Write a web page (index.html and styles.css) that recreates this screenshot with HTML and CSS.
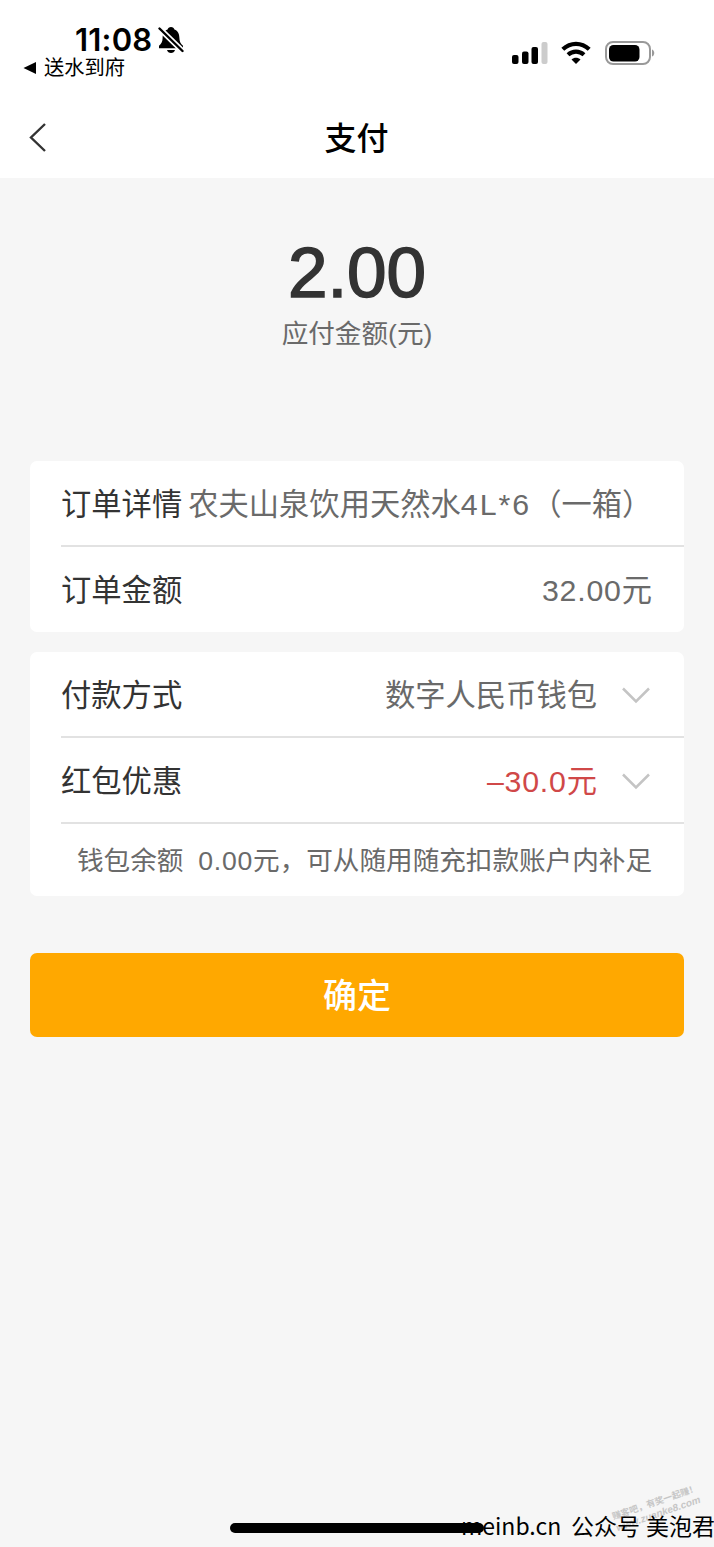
FILE: index.html
```html
<!DOCTYPE html>
<html lang="zh-CN">
<head>
    <meta charset="UTF-8">
    <meta name="viewport" content="width=device-width, initial-scale=1.0">
    <title>支付</title>
    <link rel="stylesheet" href="styles.css">
</head>
<body>
    <div class="status-bar">
        <div class="status-left">
            <div class="time-row">
                <span class="time">11:08</span>
                <svg class="bell" width="26" height="28" viewBox="0 0 26 28">
                    <path d="M13 1c-1.900 0-3 1-3.400 2.400C6 4.800 4.600 8 4.600 12c0 4-1.300 5.500-3.600 7.800v2.400h24v-2.400c-2.300-2.300-3.600-3.800-3.600-7.800 0-4-1.400-7.200-5-8.600C16 2 14.900 1 13 1z"/>
                    <path d="M9 24h8c-.5 1.900-2 2.900-4 2.900s-3.500-1-4-2.900z"/>
                    <path class="bell-gap" d="M1.500 2.500l23 22.500"/>
                    <path class="bell-slash" d="M1.500 2.500l23 22.500"/>
                </svg>
            </div>
            <div class="back-app">
                <svg width="14" height="14" viewBox="0 0 14 14"><path d="M0.500 7L13 1v12z"/></svg>
                <span>送水到府</span>
            </div>
        </div>
        <div class="status-right">
            <svg width="36" height="24" viewBox="0 0 36 24">
                <rect x="0" y="14" width="6.500" height="9" rx="2"/>
                <rect x="10" y="10.500" width="6.500" height="12.500" rx="2"/>
                <rect x="19.500" y="6" width="6.500" height="17" rx="2"/>
                <rect class="bar-off" x="29.500" y="1" width="6" height="22" rx="2"/>
            </svg>
            <svg class="wifi" width="30" height="24" viewBox="0 0 30 24">
                <path class="wifi-arc" d="M1.800 8.300C9.500 1 20.500 1 28.200 8.300"/>
                <path class="wifi-arc" d="M7 13.800c4.700-4.200 11.300-4.200 16 0"/>
                <path d="M15 23l-4.500-4.500c2.600-2.300 6.400-2.300 9 0z"/>
            </svg>
            <svg class="battery" width="50" height="24" viewBox="0 0 50 24">
                <rect class="battery-shell" x="1" y="1" width="44" height="22" rx="7"/>
                <rect x="4" y="4" width="30.500" height="16.500" rx="4.500"/>
                <path class="battery-tip" d="M47 8.500c3 1 3 6 0 7z"/>
            </svg>
        </div>
    </div>
    <div class="nav-bar">
        <svg class="nav-back" width="18" height="30" viewBox="0 0 18 30"><path d="M16 2L2 15.500 16 29"/></svg>
        <div class="nav-title">支付</div>
    </div>

    <div class="amount">
        <div class="amount-value">2.00</div>
        <div class="amount-label">应付金额(元)</div>
    </div>

    <div class="card order-card">
        <div class="row">
            <span class="label">订单详情</span>
            <span class="value goods">农夫山泉饮用天然水<span class="spec">4L*6</span>（一箱）</span>
        </div>
        <div class="row">
            <span class="label">订单金额</span>
            <span class="value"><span class="num">32.00</span>元</span>
        </div>
    </div>

    <div class="card pay-card">
        <div class="row">
            <span class="label">付款方式</span>
            <span class="value">数字人民币钱包</span>
            <svg class="arrow" width="30" height="17" viewBox="0 0 30 17"><path d="M2 1.500l13 13 13-13"/></svg>
        </div>
        <div class="row">
            <span class="label">红包优惠</span>
            <span class="value discount"><span class="num">–30.0</span>元</span>
            <svg class="arrow" width="30" height="17" viewBox="0 0 30 17"><path d="M2 1.500l13 13 13-13"/></svg>
        </div>
        <div class="row tip">
            <span>钱包余额&nbsp; <span class="num">0.00</span>元，可从随用随充扣款账户内补足</span>
        </div>
    </div>

    <button class="confirm-button">确定</button>

    <div class="home-indicator"></div>
    <div class="stamp">
        <div>赚客吧，有奖一起赚！</div>
        <div class="stamp-url">www.zuanke8.com</div>
    </div>
    <div class="watermark"><span class="site">meinb.cn</span><span class="account">公众号</span><span>美泡君</span></div>
</body>
</html>
```
FILE: styles.css
```css
* {
    box-sizing: border-box;
}
body {
    position: relative;
    height: 1547px;
    margin: 0;
    overflow: hidden;
    background-color: #f6f6f6;
    font-family: "Liberation Sans", "Noto Sans CJK SC", sans-serif;
    color: #333;
}
svg {
    display: block;
    flex: none;
}
.status-bar {
    display: flex;
    justify-content: space-between;
    height: 96px;
    padding: 24px 59px 0 23px;
    background-color: #fff;
    color: #000;
}
.time-row {
    display: flex;
    align-items: center;
    height: 31px;
    padding-left: 52px;
}
.time {
    width: 83px;
    font-family: Inter, sans-serif;
    font-size: 31px;
    font-weight: 600;
    line-height: 31px;
    letter-spacing: 0.2px;
}
.bell-gap,
.bell-slash {
    fill: none;
    stroke: #fff;
    stroke-width: 5.5;
}
.bell-slash {
    stroke: #000;
    stroke-width: 2.4;
    stroke-linecap: round;
}
.back-app {
    display: flex;
    align-items: center;
    gap: 7px;
    height: 25px;
    font-size: 20.3px;
    line-height: 24px;
}
.status-right {
    display: flex;
    padding-top: 17px;
}
.bar-off {
    fill: #ccc;
}
.wifi {
    margin-left: 13px;
}
.wifi-arc {
    fill: none;
    stroke: #000;
    stroke-width: 4.2;
}
.battery {
    margin-left: 14px;
}
.battery-shell {
    fill: none;
    stroke: #999;
    stroke-width: 2;
}
.battery-tip {
    fill: #999;
}
.nav-bar {
    display: flex;
    align-items: center;
    height: 82px;
    padding: 0 29px;
    background-color: #fff;
}
.nav-back path {
    fill: none;
    stroke: #333;
    stroke-width: 2.4;
}
.nav-title {
    flex: 1;
    padding: 0 19px 3px 0;
    color: #000;
    font-size: 32px;
    font-weight: 500;
    text-align: center;
}
.amount {
    height: 283px;
    padding-top: 55px;
    text-align: center;
}
.amount-value {
    font-size: 71px;
    line-height: 80px;
    -webkit-text-stroke: 1.6px #333;
}
.amount-label {
    font-size: 26.6px;
    line-height: 43px;
    color: #6a6a6a;
}
.card {
    margin: 0 30px;
    padding-left: 31px;
    border-radius: 7px;
    background-color: #fff;
}
.pay-card {
    margin-top: 20px;
}
.row {
    display: flex;
    align-items: center;
    height: 86px;
    padding: 0 32px 2px 0;
    border-bottom: 2px solid #e2e2e2;
    font-size: 30.3px;
    white-space: nowrap;
}
.row:last-child {
    height: 85px;
    padding-bottom: 4px;
    border-bottom: none;
}
.value {
    margin-left: auto;
    color: #6a6a6a;
}
.goods {
    margin-left: 6px;
}
.spec {
    letter-spacing: 2px;
}
.num {
    letter-spacing: 0.8px;
}
.discount {
    color: #d04848;
}
.arrow {
    margin: 4px 1px 0 24px;
}
.arrow path {
    fill: none;
    stroke: #c4c4c4;
    stroke-width: 2.5;
}
.row.tip {
    justify-content: flex-end;
    height: 72px;
    font-size: 26.6px;
    color: #6a6a6a;
}
.confirm-button {
    display: block;
    width: 654px;
    height: 84px;
    margin: 57px 30px 0;
    padding: 0 0 4px;
    border: none;
    border-radius: 7px;
    background-color: #ffa800;
    color: #fff;
    font-family: inherit;
    font-size: 34px;
    font-weight: 500;
}
/* overlays at the bottom of the screen */
.home-indicator {
    position: absolute;
    left: 230px;
    bottom: 14px;
    width: 254px;
    height: 10px;
    border-radius: 5px;
    background-color: #000;
}
.stamp {
    position: absolute;
    left: 612px;
    top: 1496px;
    color: #c6c6c6;
    font-size: 9px;
    font-weight: 700;
    line-height: 12px;
    white-space: nowrap;
    transform: rotate(-19deg);
}
.stamp-url {
    font-size: 10px;
    font-style: italic;
}
.watermark {
    position: absolute;
    left: 461px;
    bottom: 4px;
    display: flex;
    color: #000;
    font-family: "Noto Sans CJK SC", sans-serif;
    font-size: 23px;
    line-height: 36px;
    white-space: nowrap;
}
.site {
    width: 110px;
}
.account {
    width: 75px;
}
```
